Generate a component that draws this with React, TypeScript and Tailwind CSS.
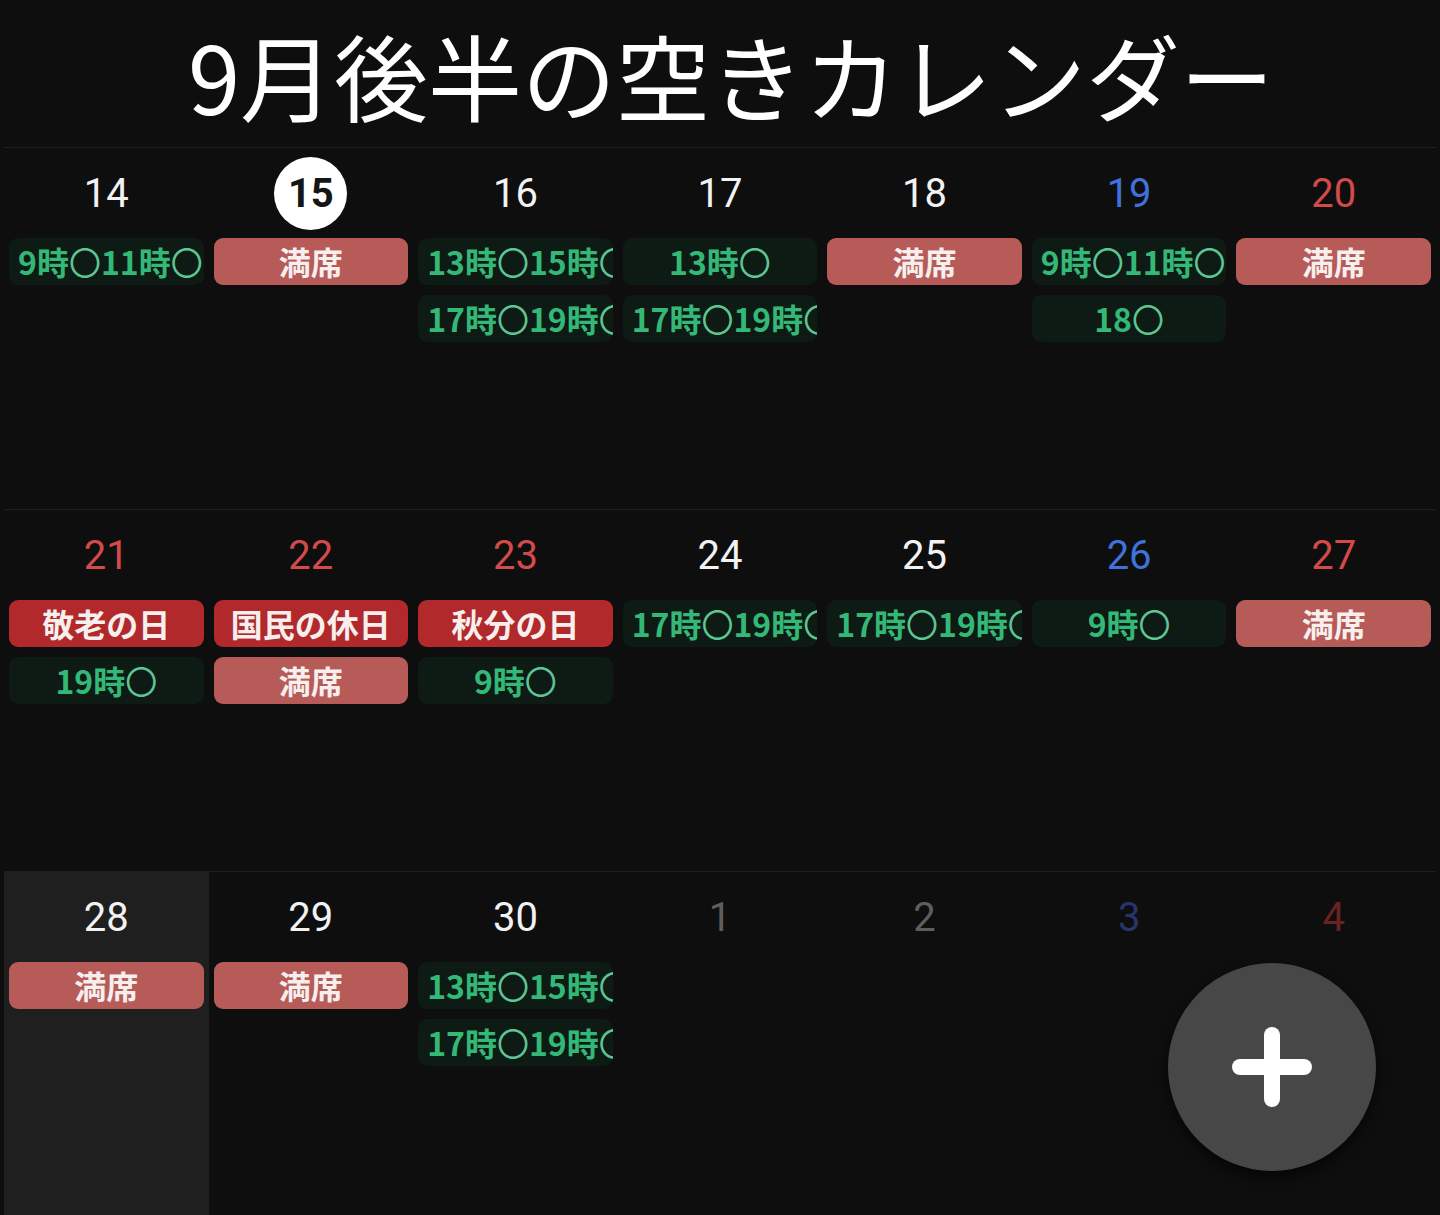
import React from "react";

type Chip = { kind: "open" | "full" | "holiday"; label: string };
type Day = {
	num: number;
	color?: "white" | "blue" | "red" | "dim" | "dimBlue" | "dimRed";
	today?: boolean;
	shaded?: boolean;
	chips?: Chip[];
};

const full: Chip = { kind: "full", label: "満席" };
const open = (label: string): Chip => ({ kind: "open", label });
const holiday = (label: string): Chip => ({ kind: "holiday", label });

const weeks: Day[][] = [
	[
		{ num: 14, chips: [open("9時〇11時〇")] },
		{ num: 15, today: true, chips: [full] },
		{ num: 16, chips: [open("13時〇15時〇"), open("17時〇19時〇")] },
		{ num: 17, chips: [open("13時〇"), open("17時〇19時〇")] },
		{ num: 18, chips: [full] },
		{ num: 19, color: "blue", chips: [open("9時〇11時〇"), open("18〇")] },
		{ num: 20, color: "red", chips: [full] },
	],
	[
		{ num: 21, color: "red", chips: [holiday("敬老の日"), open("19時〇")] },
		{ num: 22, color: "red", chips: [holiday("国民の休日"), full] },
		{ num: 23, color: "red", chips: [holiday("秋分の日"), open("9時〇")] },
		{ num: 24, chips: [open("17時〇19時〇")] },
		{ num: 25, chips: [open("17時〇19時〇")] },
		{ num: 26, color: "blue", chips: [open("9時〇")] },
		{ num: 27, color: "red", chips: [full] },
	],
	[
		{ num: 28, shaded: true, chips: [full] },
		{ num: 29, chips: [full] },
		{ num: 30, chips: [open("13時〇15時〇"), open("17時〇19時〇")] },
		{ num: 1, color: "dim" },
		{ num: 2, color: "dim" },
		{ num: 3, color: "dimBlue" },
		{ num: 4, color: "dimRed" },
	],
];

const numColor = {
	white: "text-[#f2f2f2]",
	blue: "text-[#3f73db]",
	red: "text-[#d24a4a]",
	dim: "text-[#5e5e5e]",
	dimBlue: "text-[#26356b]",
	dimRed: "text-[#6a2222]",
};

const chipStyle = {
	open: "bg-[#0e1a14] text-[#33b877]",
	full: "bg-[#b65b58] text-[#f7eeee]",
	holiday: "bg-[#b1292b] text-[#f7eeee]",
};

// the circle mark is drawn thinner than the bold digits around it
function ChipLabel({ label }: { label: string }) {
	const parts = label.split("〇");
	return (
		<>
			{parts.map((p, i) => (
				<React.Fragment key={i}>
					{p}
					{i < parts.length - 1 && (
						<span className="font-normal text-[#5cc694]">〇</span>
					)}
				</React.Fragment>
			))}
		</>
	);
}

function DayCell({ day }: { day: Day }) {
	return (
		<div className={`flex flex-col ${day.shaded ? "bg-[#1f1f1f]" : ""}`}>
			<div className="h-[88px] flex items-center justify-center pt-[3px]">
				{day.today ? (
					<div className="w-[73px] h-[73px] rounded-full bg-white flex items-center justify-center text-[40px] font-bold text-[#151515] font-['Roboto',sans-serif]">
						{day.num}
					</div>
				) : (
					<span
						className={`text-[40px] leading-none font-['Roboto',sans-serif] ${numColor[day.color ?? "white"]}`}
					>
						{day.num}
					</span>
				)}
			</div>
			<div className="flex flex-col gap-[10px] px-[5px] pt-[2px]">
				{day.chips?.map((c, i) => (
					<div
						key={i}
						className={`h-[47px] rounded-[9px] px-[9px] overflow-hidden whitespace-nowrap text-center text-[32px] leading-[47px] font-bold ${chipStyle[c.kind]}`}
					>
						<ChipLabel label={c.label} />
					</div>
				))}
			</div>
		</div>
	);
}

export default function App() {
	return (
		<div className="relative w-[1440px] h-[1215px] overflow-hidden bg-[#0e0e0e] font-['Noto_Sans_CJK_JP',sans-serif]">
			{/* Title */}
			<div className="h-[147px] flex items-center justify-center pl-[22px]">
				<h1 className="text-[94px] leading-none text-white font-normal">
					9月後半の空きカレンダー
				</h1>
			</div>

			{/* Calendar */}
			<div className="px-1">
				{weeks.map((week, wi) => (
					<div
						key={wi}
						className={`grid grid-cols-7 border-t border-[#1f1f1f] ${wi === 2 ? "h-[400px]" : "h-[362px]"}`}
					>
						{week.map((d) => (
							<DayCell key={`${wi}-${d.num}`} day={d} />
						))}
					</div>
				))}
			</div>

			{/* FAB */}
			<button className="absolute left-[1168px] top-[963px] w-[208px] h-[208px] rounded-full bg-[#474747] shadow-[0_6px_14px_rgba(0,0,0,0.6)] flex items-center justify-center">
				<svg width="80" height="80" viewBox="0 0 80 80">
					<rect x="0" y="32" width="80" height="16" rx="8" fill="white" />
					<rect x="32" y="0" width="16" height="80" rx="8" fill="white" />
				</svg>
			</button>
		</div>
	);
}
